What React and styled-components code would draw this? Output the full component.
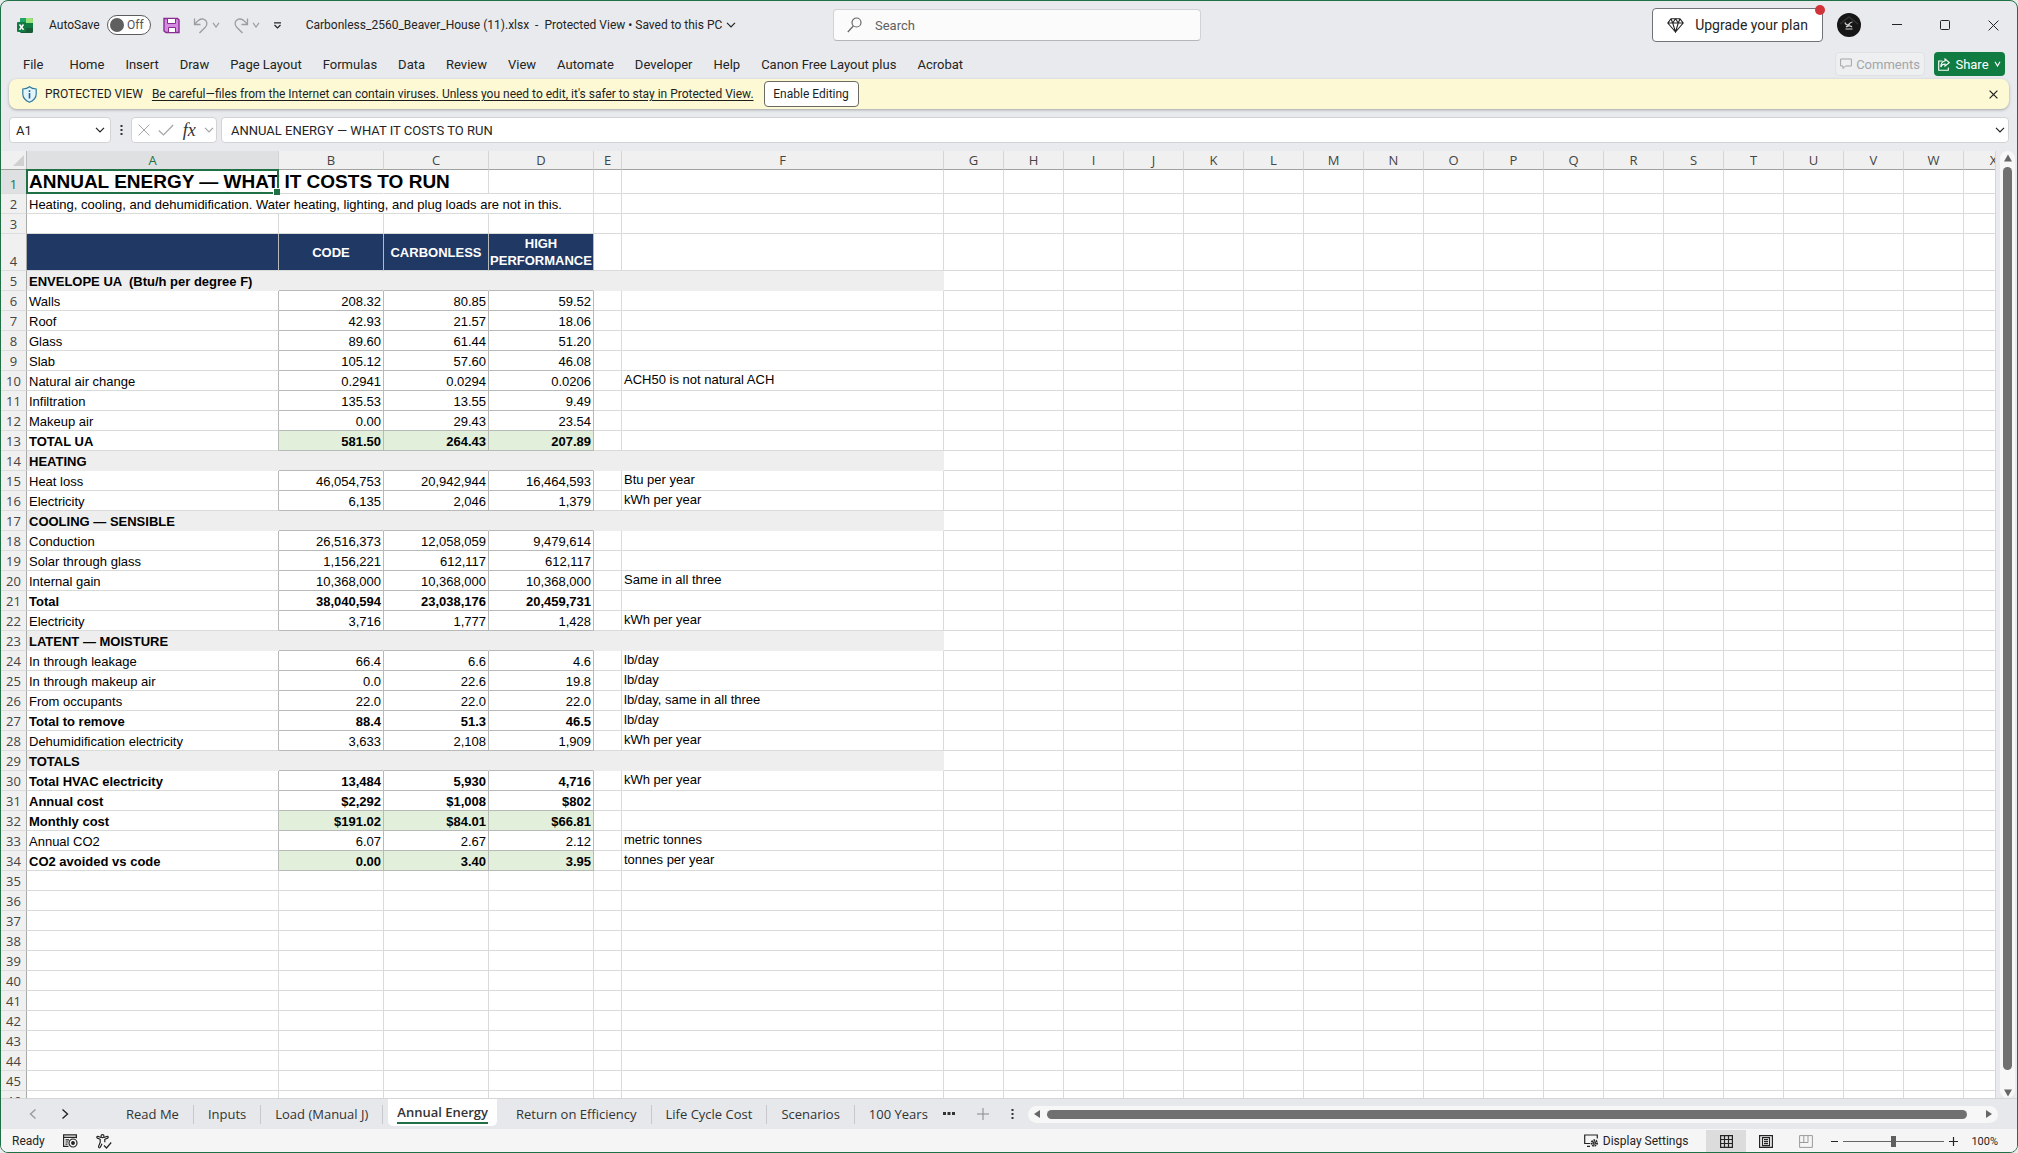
import { useState } from "react";
import styled, { createGlobalStyle } from "styled-components";

const GlobalStyle = createGlobalStyle`
  * {
    box-sizing: border-box;
  }

  body {
    margin: 0;
    font-family: Roboto, "Open Sans", sans-serif;
    font-size: 12px;
    color: #242424;
    background: #e8eaec;
  }

  button, input {
    font: inherit;
    color: inherit;
  }
`;

const Window = styled.div`
  height: 100vh;
  display: flex;
  flex-direction: column;
  border: 1px solid #1f7145;
  border-radius: 8px;
  background: #e8eaed;
  overflow: hidden;
`;

const Row = styled.div`
  display: flex;
  align-items: center;
  gap: ${(p) => p.$gap || 0}px;
`;

const PlainButton = styled.button`
  display: flex;
  align-items: center;
  justify-content: center;
  padding: 0;
  border: none;
  background: none;
  white-space: nowrap;
`;

/* ---- title bar ---- */

const TitleBar = styled.header`
  height: 48px;
  flex: none;
  display: grid;
  grid-template-columns: 1fr 368px 1fr;
  align-items: center;
  padding-left: 16px;
`;

const TitleLeft = styled(Row)`
  min-width: 0;
`;

const Toggle = styled.label`
  display: flex;
  align-items: center;
  gap: 7px;
  margin-left: 15px;
`;

const Switch = styled.span`
  position: relative;
  display: flex;
  align-items: center;
  justify-content: flex-end;
  width: 44px;
  height: 20px;
  padding-right: 6px;
  border: 1px solid #5c5c5c;
  border-radius: 10px;
  background: #fff;
  color: #555;

  input {
    position: absolute;
    inset: 0;
    margin: 0;
    opacity: 0;
  }

  &::before {
    content: "";
    position: absolute;
    left: 2px;
    width: 14px;
    height: 14px;
    border-radius: 50%;
    background: #5f5f5f;
  }
`;

const QuickTools = styled(Row)`
  margin-left: 12px;
  color: #9a9da1;
`;

const Customize = styled(PlainButton)`
  margin-left: 13px;
`;

const DocName = styled(PlainButton)`
  margin-left: 24px;
  gap: 4px;
  white-space: pre;
`;

const SearchBox = styled.label`
  display: flex;
  align-items: center;
  gap: 13px;
  height: 32px;
  padding: 0 13px;
  border: 1px solid #d0d2d4;
  border-bottom-color: #b4b6b8;
  border-radius: 4px;
  background: #fbfbfb;
  color: #666;

  input {
    flex: 1;
    border: none;
    outline: none;
    background: none;
    padding: 0;
    font-size: 13px;
  }

  input::placeholder {
    color: #616161;
    opacity: 1;
  }
`;

const TitleRight = styled(Row)`
  justify-content: flex-end;
`;

const Upgrade = styled(PlainButton)`
  position: relative;
  width: 171px;
  height: 34px;
  gap: 11px;
  border: 1px solid #6f7378;
  border-radius: 4px;
  background: #fff;
  font-size: 14px;

  &::after {
    content: "";
    position: absolute;
    top: -4px;
    right: -3px;
    width: 10px;
    height: 10px;
    border-radius: 50%;
    background: #d13438;
  }
`;

const Avatar = styled(PlainButton)`
  margin: 0 12px 0 14px;
`;

const WindowButton = styled(PlainButton)`
  width: 48px;
  height: 40px;
`;

/* ---- ribbon tabs ---- */

const Ribbon = styled.nav`
  height: 30px;
  flex: none;
  display: flex;
  align-items: center;
  justify-content: space-between;
  padding: 0 12px 0 22px;
  font-size: 13px;
`;

const MenuButton = styled(PlainButton)`
  &:first-child {
    margin-right: 5px;
  }
`;

const CommentsButton = styled(PlainButton)`
  width: 90px;
  height: 24px;
  gap: 4px;
  border: 1px solid #dfe1e3;
  border-radius: 4px;
  background: #eeeff1;
  color: #a3a5a8;
`;

const ShareButton = styled(PlainButton)`
  width: 71px;
  height: 24px;
  gap: 5px;
  border-radius: 4px;
  background: #107c41;
  color: #fff;
`;

/* ---- message bar ---- */

const MessageBar = styled.div`
  height: 30px;
  flex: none;
  display: flex;
  align-items: center;
  margin: 0 8px;
  padding: 0 9px 0 13px;
  border-radius: 8px;
  background: #fdf9d5;
  box-shadow: 0 1px 3px rgba(0, 0, 0, 0.3);
  color: #201f1e;

  a {
    color: inherit;
    margin: 0 10px 0 9px;
    text-underline-offset: 2px;
  }

  strong {
    font-weight: 400;
    margin-left: 8px;
  }
`;

const EnableButton = styled(PlainButton)`
  width: 95px;
  height: 26px;
  border: 1px solid #6b6b63;
  border-radius: 4px;
  background: #fff;
`;

const CloseMessage = styled(PlainButton)`
  width: 14px;
  margin-left: auto;
`;

/* ---- formula bar ---- */

const FormulaBar = styled.div`
  flex: none;
  display: flex;
  align-items: center;
  padding: 8px;
`;

const Field = styled.div`
  height: 26px;
  display: flex;
  align-items: center;
  border: 1px solid #d1d3d5;
  border-radius: 4px;
  background: #fff;

  input {
    flex: 1;
    min-width: 0;
    padding: 0;
    border: none;
    outline: none;
    background: none;
    font-size: 13px;
  }
`;

const NameField = styled(Field)`
  width: 102px;
  padding: 0 5px 0 6px;
`;

const FxField = styled(Field)`
  width: 86px;
  justify-content: space-between;
  padding: 0 2px 0 6px;
  color: #a5a5a5;
`;

const TextField = styled(Field)`
  flex: 1;
  margin-left: 4px;
  padding: 0 3px 0 9px;
`;

const Grip = styled.span`
  width: 20px;
  display: flex;
  justify-content: center;
`;

const Fx = styled.span`
  font: italic 18px/20px "Liberation Serif", serif;
  color: #333;
`;

/* ---- sheet ---- */

const SheetArea = styled.main`
  flex: 1;
  min-height: 0;
  display: flex;
`;

const SheetScroll = styled.div`
  flex: 1;
  min-width: 0;
  overflow: hidden;
  background: #fff;
  border-right: 1px solid #d5d5d5;
`;

const Grid = styled.table`
  table-layout: fixed;
  width: ${(p) => p.$width}px;
  border-collapse: separate;
  border-spacing: 0;
  font-family: "Liberation Sans", Arial, sans-serif;
  font-size: 13px;
  line-height: 17px;
  color: #000;

  th, td {
    padding: 0 2px;
    white-space: nowrap;
    vertical-align: bottom;
  }
`;

const ColHead = styled.th`
  height: 19px;
  border-right: 1px solid #d4d5d6;
  border-bottom: 1px solid ${(p) => (p.$active ? "#1f7145" : "#a0a2a0")};
  background: ${(p) => (p.$active ? "#dfe0e1" : "#f0f0f0")};
  color: ${(p) => (p.$active ? "#1f7145" : "#444")};
  font: 400 13px/18px "Open Sans", "Noto Sans", sans-serif;
  text-align: center;
`;

const Corner = styled(ColHead)`
  border-right-color: #bcbcbc;

  svg {
    display: block;
    margin: 0 0 3px auto;
  }
`;

const RowHead = styled.th`
  height: ${(p) => p.$height}px;
  border-right: 1px solid #a8aaa8;
  border-bottom: 1px solid #dcdddd;
  background: ${(p) => (p.$active ? "#dfe0e1" : "#f0f0f0")};
  color: ${(p) => (p.$active ? "#1f7145" : "#444")};
  font: 400 13px/18px "Open Sans", "Noto Sans", sans-serif;
  text-align: center;
`;

const lineColor = { grid: "#d9dada", box: "#b8b9b9", none: "transparent", band: "#eeeeee" };

const Cell = styled.td`
  position: ${(p) => (p.$anchor ? "relative" : "static")};
  border-right: 1px solid ${(p) => lineColor[p.$right || "grid"]};
  border-bottom: 1px solid ${(p) => lineColor[p.$bottom || "grid"]};
  background: ${(p) => p.$fill || "transparent"};
  background-clip: ${(p) => (p.$fill === "#eeeeee" ? "border-box" : "padding-box")};
  font-weight: ${(p) => (p.$bold ? 700 : 400)};
  text-align: ${(p) => p.$align || "left"};
`;

const BandLabel = styled(Cell)`
  && {
    white-space: pre;
  }
`;

const NoteCell = styled(Cell)`
  && {
    vertical-align: top;
  }
`;

const HeadCell = styled(Cell)`
  && {
    padding: 0;
    vertical-align: middle;
    white-space: normal;
  }
  color: #fff;
  text-align: center;
`;

const SheetTitle = styled.span`
  display: block;
  font-size: 19px;
  line-height: 23px;
`;

const Selection = styled.span`
  position: absolute;
  inset: -1px;
  border: 2px solid #1f7145;

  &::after {
    content: "";
    position: absolute;
    right: -3px;
    bottom: -3px;
    width: 6px;
    height: 6px;
    border: 1px solid #fff;
    border-width: 1px 0 0 1px;
    background: #1f7145;
  }
`;

/* ---- scroll bars ---- */

const VScroll = styled.div`
  width: 15px;
  flex: none;
  display: flex;
  flex-direction: column;
  align-items: center;
  gap: 5px;
  margin: 0 2px 0 4px;
  padding: 3px 0 1px;
  border-radius: 8px;
  background: #f7f7f7;
`;

const Thumb = styled.div`
  flex: 1;
  border-radius: 5px;
  background: #707070;
`;

const VThumb = styled(Thumb)`
  width: 9px;
  margin-bottom: 14px;
`;

const HScroll = styled.div`
  flex: 1;
  display: flex;
  align-items: center;
  gap: 6px;
  height: 17px;
  margin: 0 19px 0 14px;
  padding: 0 5px;
  border-radius: 9px;
  background: #f7f7f7;
`;

const HThumb = styled(Thumb)`
  height: 9px;
  margin-right: 12px;
`;

/* ---- sheet tabs and status bar ---- */

const TabBar = styled.div`
  height: 32px;
  flex: none;
  display: flex;
  align-items: center;
  border-top: 1px solid #d3d5d7;
  border-bottom: 1px solid #f6f6f6;
  background: #e6e8eb;
  font-family: "Open Sans", "Noto Sans", sans-serif;
`;

const TabNav = styled(Row)`
  width: 111px;
  padding-left: 26px;
  gap: 20px;

  button:disabled {
    color: #9a9a9a;
  }
`;

const SheetTab = styled.button`
  height: 19px;
  padding: 0 14px;
  border: none;
  border-right: 1px solid #c6c8ca;
  background: none;
  font-size: 13px;
  line-height: 18px;
  color: #333;
  white-space: nowrap;

  &:last-of-type {
    border-right-color: transparent;
  }
`;

const ActiveTab = styled(SheetTab)`
  align-self: flex-start;
  height: 27px;
  margin: 0 5px;
  padding: 0 9px;
  border: none;
  border-radius: 0 0 5px 5px;
  background: #fff;
  font-weight: 600;

  span {
    display: block;
    border-bottom: 2px solid #1f7145;
    line-height: 20px;
  }
`;

const TabTools = styled(Row)`
  gap: 22px;
`;

const StatusBar = styled.footer`
  height: 22px;
  flex: none;
  display: flex;
  align-items: center;
  justify-content: space-between;
  padding: 0 19px 0 11px;
  background: #f5f5f5;
`;

const ViewButtons = styled(Row)`
  margin-left: 18px;
`;

const ViewButton = styled(PlainButton)`
  width: 40px;
  height: 22px;
  background: ${(p) => (p.$active ? "#dcdcdc" : "none")};
`;

const ZoomRange = styled.input`
  width: 101px;
  height: 14px;
  margin: 0;
  appearance: none;
  background: linear-gradient(#666, #666) center / 100% 1px no-repeat;

  &::-webkit-slider-thumb {
    appearance: none;
    width: 5px;
    height: 11px;
    background: #5f5f5f;
  }
`;

const ZoomTools = styled(Row)`
  gap: 5px;
  margin-left: 5px;

  output {
    margin-left: 8px;
    font-size: 11px;
  }
`;

/* ---- icons ---- */

const Icon = ({ w = 16, h, sw = 1, children, ...rest }) => (
  <svg width={w} height={h || w} viewBox={`0 0 ${w} ${h || w}`} fill="none" stroke="currentColor" strokeWidth={sw} aria-hidden="true" {...rest}>
    {children}
  </svg>
);

const Chevron = ({ w = 10, sw = 1.2 }) => (
  <Icon w={w} h={6} sw={sw}>
    <path d={`M1 .8 ${w / 2} 5 ${w - 1} .8`} />
  </Icon>
);

const ExcelIcon = () => (
  <svg width="17" height="17" viewBox="0 0 17 17" aria-hidden="true">
    <rect x="3" y="1" width="13" height="15" rx="1.5" fill="#185c37" />
    <path d="M3 1.8Q3 1 4 1h6v6H3z" fill="#21a366" />
    <path d="M9 1h5.500Q16 1 16 2.500V6H9z" fill="#9be37b" />
    <path d="M9 6h7v5H9z" fill="#107c41" />
    <rect x="0" y="5" width="9" height="10" rx="1" fill="#107c41" />
    <path d="M2.500 7.500 6.500 12.700M6.500 7.500 2.500 12.700" stroke="#fff" strokeWidth="1.500" />
  </svg>
);

const SaveIcon = () => (
  <Icon w={17} stroke="#8a2a94">
    <path d="M1 1.500h13.500l1.500 1.500v12.500H3L1 14z" fill="#d58be0" strokeWidth="1.400" />
    <path d="M4.500 1.500h8v5h-8z" fill="#fff" />
    <path d="M5.500 10.500h7v5h-7z" fill="#fff" />
  </Icon>
);

const UndoIcon = ({ flip }) => (
  <Icon w={16} h={17} sw={1.3} transform={flip ? "scale(-1 1)" : undefined}>
    <path d="M1.500 1.500v6h6M1.700 7.300C4.500 3.500 7.500 1.300 10.500 2.200c4 1.300 4.300 5.300 1.800 8L6.500 16" />
  </Icon>
);

const CustomizeIcon = () => (
  <Icon w={9} h={7} sw={1.2}>
    <path d="M1 .8h7M1.500 3 4.500 6 7.500 3" />
  </Icon>
);

const SearchIcon = () => (
  <Icon w={15} h={16} sw={1.2}>
    <circle cx="9.500" cy="5.500" r="4.500" />
    <path d="M6.300 9 .8 15" />
  </Icon>
);

const DiamondIcon = () => (
  <Icon w={17} h={15} sw={1.1}>
    <path d="M4 .8h9L16.200 5 8.500 14 .8 5zM.8 5h15.400M4 .8 5.700 5l2.800 9 2.800-9L13 .8M5.700 5l2.800-4.200L11.300 5" />
  </Icon>
);

const AvatarIcon = () => (
  <Icon w={24} stroke="none">
    <circle cx="12" cy="12" r="12" fill="#161616" />
    <path d="M3 11 12 4l9 7" stroke="#333" strokeWidth="1.500" />
    <path d="M8 9.500c.5 2 2 2.800 3.500 2 1.500-.7 1.500-2.500 4-2.500M9 14c1.500-1.500 4.500-1.500 6 0M8.500 16h7M12.500 11.500 10.500 14" stroke="#d0d0d0" strokeWidth="1.200" />
  </Icon>
);

const CommentIcon = () => (
  <Icon w={12} h={12}>
    <path d="M.6 1h10.800v7H5.500L3 10.600V8H.6z" />
  </Icon>
);

const ShareIcon = () => (
  <Icon w={12} h={13} sw={1.1}>
    <path d="M4.500 3H.7v9.300h9.600V9.500M7 1l4.300 3.600L7 8V6C4.800 6 3.500 7.200 2.800 9c0-3 1.500-5.500 4.200-6z" />
  </Icon>
);

const ShieldIcon = () => (
  <Icon w={15} h={17} stroke="#2b7a9e" sw={1.2}>
    <path d="M7.500.8C5.500 2.500 3.300 3 .8 3v5c0 4 2.500 6.500 6.700 8.200 4.200-1.700 6.700-4.200 6.700-8.200V3c-2.500 0-4.700-.5-6.700-2.200z" fill="#e4f4fb" />
    <path d="M7.500 7v5.500M7.500 4.300v1.600" stroke="#1668a0" strokeWidth="1.600" />
  </Icon>
);

const CloseIcon = ({ w = 10, sw = 1.2 }) => (
  <Icon w={w} sw={sw}>
    <path d={`M.6 .6 ${w - 0.6} ${w - 0.6}M${w - 0.6} .6 .6 ${w - 0.6}`} />
  </Icon>
);

const CheckIcon = () => (
  <Icon w={16} h={12} sw={1.2}>
    <path d="M.8 6.500 5.500 11 15.200 1" />
  </Icon>
);

const Dots = () => (
  <Icon w={3} h={12} stroke="none" fill="#333">
    <path d="M.5 1h2v2h-2zM.5 5h2v2h-2zM.5 9h2v2h-2z" />
  </Icon>
);

const Arrow = ({ dir }) => (
  <svg width="8" height="8" viewBox="0 0 8 8" fill="#666" aria-hidden="true">
    <path d={{ up: "M0 7.500 4 .5l4 7z", down: "M0 .5h8l-4 7z", left: "M7 0v8L1 4z", right: "M1 0v8l6-4z" }[dir]} />
  </svg>
);

const SideChevron = ({ right }) => (
  <Icon w={12} sw={1.4}>
    <path d={right ? "M3.500 1.500 8.500 6l-5 4.500" : "M8.500 1.500 3.500 6l5 4.500"} />
  </Icon>
);

const MacroIcon = () => (
  <Icon w={15} h={14} sw={1.2}>
    <path d="M5.500 12.400H.6V.8h12.800v3.500M.6 3.400h12.800M2.500 5.800h3.500M2.500 8h2.500M2.500 10.200h2" />
    <circle cx="10" cy="9" r="4" />
    <circle cx="10" cy="9" r="1.300" fill="currentColor" />
  </Icon>
);

const AccessIcon = () => (
  <Icon w={16} h={15} sw={1.2}>
    <circle cx="6.500" cy="2.200" r="1.500" />
    <path d="M5 3.500 1.800 2.300C.6 2.200.5 3.700 1.400 4.100l2.800 1.200v3L2.500 12.500c0 1.500 1.300 1.600 1.800.8L6 9.800M8 3.500l3.200-1.200c1.200-.1 1.300 1.400.4 1.800L8.800 5.300v3M8 11.500l2.500 2.500L15.200 8.500" />
  </Icon>
);

const DisplayIcon = () => (
  <Icon w={15} h={14} sw={1.2}>
    <path d="M6 9.500H.7V1h12.600v3.500M3 12.400h3" />
    <circle cx="10.300" cy="9" r="2.800" strokeWidth="1.800" strokeDasharray="1.600 .8" />
    <circle cx="10.300" cy="9" r="1.200" />
  </Icon>
);

const NormalIcon = () => (
  <Icon w={13} sw={1.2}>
    <path d="M.6.6h11.800v11.800H.6zM.6 4.500h11.800M.6 8.500h11.800M4.500.6v11.800M8.500.6v11.800" />
  </Icon>
);

const PageIcon = () => (
  <Icon w={14} h={13} sw={1.2}>
    <path d="M.6.6h12.800v11.800H.6zM3.500 2.600h7v8h-7zM5 4.600h4M5 6.600h4M5 8.600h4" />
  </Icon>
);

const BreakIcon = () => (
  <Icon w={14} h={13} color="#9b9b9b">
    <path d="M.6.600h12.800v11.800H.6zM.6 7.500h8.400V.6M4.800.6v6.900" />
  </Icon>
);

/* ---- data ---- */

const menu = ["File", "Home", "Insert", "Draw", "Page Layout", "Formulas", "Data", "Review", "View", "Automate", "Developer", "Help", "Canon Free Layout plus", "Acrobat"];

const columns = [
  ["A", 252], ["B", 105], ["C", 105], ["D", 105], ["E", 28], ["F", 322],
  ..."GHIJKLMNOPQRSTUVWX".split("").map((c) => [c, 60]),
];

const tableWidth = 26 + columns.reduce((sum, c) => sum + c[1], 0);

const section = (label) => ({ type: "section", label });
const line = (label, values, note, style = "") => ({ type: "line", label, values, note, bold: style !== "", green: style === "green" });

const rows = [
  { type: "title", height: 24, label: "ANNUAL ENERGY — WHAT IT COSTS TO RUN" },
  { type: "text", label: "Heating, cooling, and dehumidification. Water heating, lighting, and plug loads are not in this." },
  { type: "blank" },
  { type: "head", height: 37, values: ["CODE", "CARBONLESS", "HIGH PERFORMANCE"] },
  section("ENVELOPE UA  (Btu/h per degree F)"),
  line("Walls", ["208.32", "80.85", "59.52"]),
  line("Roof", ["42.93", "21.57", "18.06"]),
  line("Glass", ["89.60", "61.44", "51.20"]),
  line("Slab", ["105.12", "57.60", "46.08"]),
  line("Natural air change", ["0.2941", "0.0294", "0.0206"], "ACH50 is not natural ACH"),
  line("Infiltration", ["135.53", "13.55", "9.49"]),
  line("Makeup air", ["0.00", "29.43", "23.54"]),
  line("TOTAL UA", ["581.50", "264.43", "207.89"], "", "green"),
  section("HEATING"),
  line("Heat loss", ["46,054,753", "20,942,944", "16,464,593"], "Btu per year"),
  line("Electricity", ["6,135", "2,046", "1,379"], "kWh per year"),
  section("COOLING — SENSIBLE"),
  line("Conduction", ["26,516,373", "12,058,059", "9,479,614"]),
  line("Solar through glass", ["1,156,221", "612,117", "612,117"]),
  line("Internal gain", ["10,368,000", "10,368,000", "10,368,000"], "Same in all three"),
  line("Total", ["38,040,594", "23,038,176", "20,459,731"], "", "bold"),
  line("Electricity", ["3,716", "1,777", "1,428"], "kWh per year"),
  section("LATENT — MOISTURE"),
  line("In through leakage", ["66.4", "6.6", "4.6"], "lb/day"),
  line("In through makeup air", ["0.0", "22.6", "19.8"], "lb/day"),
  line("From occupants", ["22.0", "22.0", "22.0"], "lb/day, same in all three"),
  line("Total to remove", ["88.4", "51.3", "46.5"], "lb/day", "bold"),
  line("Dehumidification electricity", ["3,633", "2,108", "1,909"], "kWh per year"),
  section("TOTALS"),
  line("Total HVAC electricity", ["13,484", "5,930", "4,716"], "kWh per year", "bold"),
  line("Annual cost", ["$2,292", "$1,008", "$802"], "", "bold"),
  line("Monthly cost", ["$191.02", "$84.01", "$66.81"], "", "green"),
  line("Annual CO2", ["6.07", "2.67", "2.12"], "metric tonnes"),
  line("CO2 avoided vs code", ["0.00", "3.40", "3.95"], "tonnes per year", "green"),
  ...Array.from({ length: 12 }, () => ({ type: "blank" })),
];

const tabs = ["Read Me", "Inputs", "Load (Manual J)", "Annual Energy", "Return on Efficiency", "Life Cycle Cost", "Scenarios", "100 Years"];

const blanks = (n) => Array.from({ length: n }, (_, i) => <Cell key={`b${i}`} />);

const RowCells = ({ row }) => {
  if (row.type === "title") {
    return (
      <>
        <Cell $anchor $bold>
          <SheetTitle>{row.label}</SheetTitle>
          <Selection />
        </Cell>
        <Cell $right="none" />
        {blanks(22)}
      </>
    );
  }
  if (row.type === "text") {
    return (
      <>
        <Cell colSpan={4}>{row.label}</Cell>
        {blanks(20)}
      </>
    );
  }
  if (row.type === "head") {
    return (
      <>
        <HeadCell $fill="#1f3864" $right="box" />
        {row.values.map((v) => (
          <HeadCell key={v} $fill="#1f3864" $right="box" $bold>{v}</HeadCell>
        ))}
        {blanks(20)}
      </>
    );
  }
  if (row.type === "section") {
    const band = { $fill: "#eeeeee", $right: "none" };
    return (
      <>
        <BandLabel {...band} $bottom="band" $bold>{row.label}</BandLabel>
        <Cell {...band} $bottom="box" />
        <Cell {...band} $bottom="box" />
        <Cell {...band} $bottom="box" />
        <Cell {...band} $bottom="band" />
        <Cell {...band} $bottom="band" />
        {blanks(18)}
      </>
    );
  }
  if (row.type === "line") {
    return (
      <>
        <Cell $right="box" $bold={row.bold}>{row.label}</Cell>
        {row.values.map((v, i) => (
          <Cell key={i} $right="box" $bottom="box" $align="right" $bold={row.bold} $fill={row.green && "#e2efda"}>{v}</Cell>
        ))}
        <Cell />
        <NoteCell>{row.note}</NoteCell>
        {blanks(18)}
      </>
    );
  }
  return blanks(24);
};

const Sheet = () => (
  <Grid $width={tableWidth}>
    <colgroup>
      <col width="26" />
      {columns.map(([name, width]) => <col key={name} width={width} />)}
    </colgroup>
    <thead>
      <tr>
        <Corner>
          <Icon w={11} h={11} stroke="none"><path d="M11 0v11H0z" fill="#d0d0d0" /></Icon>
        </Corner>
        {columns.map(([name]) => <ColHead key={name} scope="col" $active={name === "A"}>{name}</ColHead>)}
      </tr>
    </thead>
    <tbody>
      {rows.map((row, i) => (
        <tr key={i}>
          <RowHead scope="row" $height={row.height || 20} $active={i === 0}>{i + 1}</RowHead>
          <RowCells row={row} />
        </tr>
      ))}
    </tbody>
  </Grid>
);

const App = () => {
  const [zoom, setZoom] = useState(100);
  const [autoSave, setAutoSave] = useState(false);

  return (
    <Window>
      <GlobalStyle />
      <TitleBar>
        <TitleLeft>
          <ExcelIcon />
          <Toggle>
            AutoSave
            <Switch>
              <input type="checkbox" checked={autoSave} onChange={(e) => setAutoSave(e.target.checked)} />
              {autoSave ? "On" : "Off"}
            </Switch>
          </Toggle>
          <QuickTools $gap={13}>
            <PlainButton aria-label="Save"><SaveIcon /></PlainButton>
            <Row $gap={3}>
              <UndoIcon />
              <Chevron w={8} />
            </Row>
            <Row $gap={3}>
              <UndoIcon flip />
              <Chevron w={8} />
            </Row>
          </QuickTools>
          <Customize aria-label="Customize Quick Access Toolbar"><CustomizeIcon /></Customize>
          <DocName>
            {"Carbonless_2560_Beaver_House (11).xlsx  -  Protected View • Saved to this PC"}
            <Chevron />
          </DocName>
        </TitleLeft>
        <SearchBox>
          <SearchIcon />
          <input type="search" placeholder="Search" aria-label="Search" />
        </SearchBox>
        <TitleRight>
          <Upgrade><DiamondIcon />Upgrade your plan</Upgrade>
          <Avatar aria-label="Account"><AvatarIcon /></Avatar>
          <WindowButton aria-label="Minimize"><Icon w={10}><path d="M0 4.500h10" /></Icon></WindowButton>
          <WindowButton aria-label="Maximize"><Icon w={10}><rect x=".5" y=".5" width="9" height="9" rx="1" /></Icon></WindowButton>
          <WindowButton aria-label="Close"><CloseIcon w={11} sw={1} /></WindowButton>
        </TitleRight>
      </TitleBar>

      <Ribbon>
        <Row $gap={21}>
          {menu.map((name) => <MenuButton key={name}>{name}</MenuButton>)}
        </Row>
        <Row $gap={9}>
          <CommentsButton disabled><CommentIcon />Comments</CommentsButton>
          <ShareButton><ShareIcon />Share<Chevron w={7} /></ShareButton>
        </Row>
      </Ribbon>

      <MessageBar>
        <ShieldIcon />
        <strong>PROTECTED VIEW</strong>
        <a href="#info">Be careful—files from the Internet can contain viruses. Unless you need to edit, it's safer to stay in Protected View.</a>
        <EnableButton>Enable Editing</EnableButton>
        <CloseMessage aria-label="Close message"><CloseIcon w={9} /></CloseMessage>
      </MessageBar>

      <FormulaBar>
        <NameField>
          <input aria-label="Name box" defaultValue="A1" />
          <Chevron />
        </NameField>
        <Grip><Dots /></Grip>
        <FxField>
          <CloseIcon w={12} sw={1} />
          <CheckIcon />
          <Fx>fx</Fx>
          <Chevron />
        </FxField>
        <TextField>
          <input aria-label="Formula" readOnly value="ANNUAL ENERGY — WHAT IT COSTS TO RUN" />
          <Chevron />
        </TextField>
      </FormulaBar>

      <SheetArea>
        <SheetScroll><Sheet /></SheetScroll>
        <VScroll>
          <Arrow dir="up" />
          <VThumb />
          <Arrow dir="down" />
        </VScroll>
      </SheetArea>

      <TabBar>
        <TabNav>
          <PlainButton aria-label="Previous sheets" disabled><SideChevron /></PlainButton>
          <PlainButton aria-label="Next sheets"><SideChevron right /></PlainButton>
        </TabNav>
        {tabs.map((name) =>
          name === "Annual Energy" ? (
            <ActiveTab key={name}><span>{name}</span></ActiveTab>
          ) : (
            <SheetTab key={name}>{name}</SheetTab>
          )
        )}
        <TabTools>
          <PlainButton aria-label="More sheets"><Icon w={12} h={4} stroke="none" fill="#333"><path d="M0 0h3v3H0zM4.500 0h3v3h-3zM9 0h3v3H9z" /></Icon></PlainButton>
          <PlainButton aria-label="New sheet"><Icon w={12} color="#888"><path d="M6 0v12M0 6h12" /></Icon></PlainButton>
          <Dots />
        </TabTools>
        <HScroll>
          <Arrow dir="left" />
          <HThumb />
          <Arrow dir="right" />
        </HScroll>
      </TabBar>

      <StatusBar>
        <Row $gap={18}>
          <span>Ready</span>
          <MacroIcon />
          <AccessIcon />
        </Row>
        <Row>
          <Row $gap={4}><DisplayIcon />Display Settings</Row>
          <ViewButtons>
            <ViewButton $active aria-label="Normal"><NormalIcon /></ViewButton>
            <ViewButton aria-label="Page Layout"><PageIcon /></ViewButton>
            <ViewButton aria-label="Page Break Preview"><BreakIcon /></ViewButton>
          </ViewButtons>
          <ZoomTools>
            <PlainButton aria-label="Zoom out"><Icon w={7} sw={1.2}><path d="M0 3.500h7" /></Icon></PlainButton>
            <ZoomRange type="range" min="10" max="190" value={zoom} aria-label="Zoom" onChange={(e) => setZoom(Number(e.target.value))} />
            <PlainButton aria-label="Zoom in"><Icon w={9} sw={1.2}><path d="M0 4.500h9M4.500 0v9" /></Icon></PlainButton>
            <output>{zoom}%</output>
          </ZoomTools>
        </Row>
      </StatusBar>
    </Window>
  );
};

export default App;
